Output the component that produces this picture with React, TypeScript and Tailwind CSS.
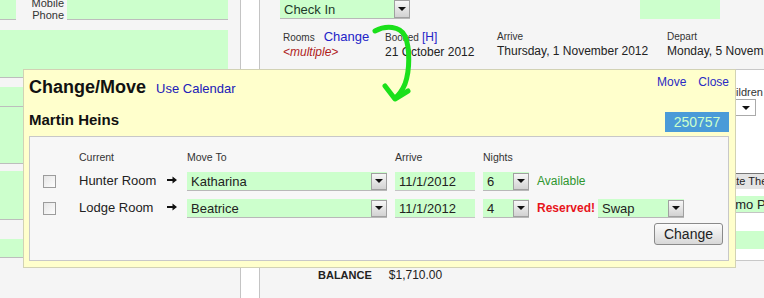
import React from "react";

function Tri() {
  return <span className="h-0 w-0 border-x-[4px] border-t-[4px] border-x-transparent border-t-[#111]" />;
}

function DropBtn({ h = "h-[17px]" }: { h?: string }) {
  return (
    <span
      className={
        "flex w-[16px] shrink-0 items-center justify-center border border-[#a0a0a0] bg-linear-to-b from-[#f7f7f7] to-[#d2d2d2] " +
        h
      }
    >
      <Tri />
    </span>
  );
}

function GreenSelect({ value, className }: { value: string; className: string }) {
  return (
    <div className={"flex h-[19px] items-start border-b border-[#b8b8b8] bg-[#ccffcc] " + className}>
      <span className="flex-1 truncate pl-[4px] pt-[1px] text-[13px] leading-[17px] text-[#222]">{value}</span>
      <span className="mt-[1px]">
        <DropBtn />
      </span>
    </div>
  );
}

function GreenInput({ value, className }: { value: string; className: string }) {
  return (
    <div
      className={
        "h-[19px] border-b border-[#c4c4c4] bg-[#ccffcc] pl-[4px] pt-[1px] text-[13px] leading-[17px] text-[#222] " +
        className
      }
    >
      {value}
    </div>
  );
}

function Check() {
  return <span className="block h-[13px] w-[13px] border border-[#9c9c9c] bg-linear-to-br from-[#e6e6e6] to-[#fdfdfd]" />;
}

function RowArrow() {
  return (
    <svg width="10" height="8" viewBox="0 0 10 8" className="-mt-[3px]">
      <path d="M0 3h5.5V0.5L10 4 5.5 7.5V5H0z" fill="#111" />
    </svg>
  );
}

type MoveRow = {
  current: string;
  to: string;
  arrive: string;
  nights: string;
  status: "ok" | "taken";
};

const rows: MoveRow[] = [
  { current: "Hunter Room", to: "Katharina", arrive: "11/1/2012", nights: "6", status: "ok" },
  { current: "Lodge Room", to: "Beatrice", arrive: "11/1/2012", nights: "4", status: "taken" },
];

function Field({ className }: { className: string }) {
  return <div className={"border-b border-[#bdbdbd] bg-[#ccffcc] " + className} />;
}

export default function App() {
  return (
    <div className="relative flex h-[298px] w-[764px] overflow-hidden bg-[#f5f5f5] font-['Liberation_Sans',Arial,sans-serif] text-[#222]">
      {/* left column of guest fields */}
      <div className="w-[241px] shrink-0 border-r border-[#c4c4c4]">
        <div className="flex h-[20px] items-start">
          <Field className="h-[20px] w-[16px]" />
          <div className="-mt-[3px] w-[51px] pr-[3px] text-right text-[11px] leading-[12px] text-[#333]">
            Mobile
            <br />
            Phone
          </div>
          <Field className="h-[20px] w-[161px]" />
        </div>
        <Field className="mt-[10px] h-[48px] w-[228px]" />
        <Field className="mt-[9px] h-[20px] w-[228px]" />
        <Field className="h-[57px] w-[228px]" />
        <Field className="mt-[7px] h-[49px] w-[228px]" />
        <Field className="mt-[19px] h-[19px] w-[228px]" />
      </div>

      <div className="w-[19px] shrink-0 border-r border-[#c4c4c4] bg-white" />

      {/* booking panel */}
      <div className="flex min-w-0 flex-1 flex-col">
        <div className="flex h-[19px] pl-[20px]">
          <div className="flex h-[19px] w-[130px] items-start border-b border-[#b8b8b8] bg-[#ccffcc]">
            <span className="flex-1 pl-[4px] pt-[1px] text-[13px] leading-[17px] text-[#1d3a2a]">Check In</span>
            <DropBtn h="h-[18px]" />
          </div>
          <div className="ml-[230px] h-[19px] w-[80px] bg-[#ccffcc]" />
        </div>

        <div className="mt-[12px] flex pl-[23px]">
          <div className="w-[102px] shrink-0">
            <div className="flex items-baseline gap-[9px] leading-[12px]">
              <span className="text-[10px] text-[#333]">Rooms</span>
              <span className="text-[13px] text-[#2323c8]">Change</span>
            </div>
            <div className="mt-[1px] text-[12px] leading-[14px] italic text-[#b01c1c]">&lt;multiple&gt;</div>
          </div>
          <div className="w-[112px] shrink-0">
            <div className="flex items-baseline gap-[3px] leading-[12px]">
              <span className="text-[10px] text-[#333]">Booked</span>
              <span className="text-[12px] text-[#2323c8]">[H]</span>
            </div>
            <div className="mt-[1px] text-[12px] leading-[14px]">21 October 2012</div>
          </div>
          <div className="w-[170px] shrink-0">
            <div className="text-[10px] leading-[12px] text-[#333]">Arrive</div>
            <div className="mt-[1px] text-[12px] leading-[14px]">Thursday, 1 November 2012</div>
          </div>
          <div className="shrink-0 whitespace-nowrap">
            <div className="text-[10px] leading-[12px] text-[#333]">Depart</div>
            <div className="mt-[1px] text-[12px] leading-[14px]">Monday, 5 November 2012</div>
          </div>
        </div>

        <div className="mt-[10px] h-[192px] shrink-0 border-y border-[#c8c8c8] bg-white pl-[440px]">
          <div className="w-[110px]">
            <div className="mt-[16px] whitespace-nowrap pl-[22px] text-[11px] leading-[13px] text-[#333]">Children</div>
            <div className="flex h-[17px] w-[56px] items-center justify-end border border-[#aaa] bg-white pr-[5px]">
              <Tri />
            </div>
            <div className="mt-[57px] h-[16px] w-[104px] whitespace-nowrap border-t border-[#777] bg-[#e4e4e4] pl-[10px] text-[11px] leading-[15px] text-[#222]">
              Update The Rate
            </div>
            <div className="mt-[7px] h-[17px] whitespace-nowrap border-b border-[#c4c4c4] bg-[#ccffcc] pl-[15px] text-[13px] leading-[17px]">
              Promo Package
            </div>
            <div className="mt-[18px] h-[18px] bg-[#ccffcc]" />
          </div>
        </div>

        <div className="mt-[8px] flex items-baseline pl-[58px]">
          <span className="text-[11px] font-bold leading-[13px]">BALANCE</span>
          <span className="ml-[17px] text-[12px] leading-[13px]">$1,710.00</span>
        </div>
      </div>

      {/* change / move dialog */}
      <div className="absolute left-[23px] top-[69px] w-[713px] border border-[#d2d2b4] bg-[#ffffcc]">
        <div className="flex items-start justify-between pl-[5px] pr-[6px] pt-[5px]">
          <div className="mt-[2px] flex items-baseline">
            <span className="text-[18px] font-bold leading-[21px] text-[#111]">Change/Move</span>
            <span className="ml-[10px] text-[13px] text-[#2020b8]">Use Calendar</span>
          </div>
          <div className="flex gap-[12px] text-[12px] leading-[14px] text-[#2a2ac4]">
            <span>Move</span>
            <span>Close</span>
          </div>
        </div>
        <div className="mt-[12px] flex items-start justify-between pl-[5px] pr-[6px]">
          <span className="text-[15px] font-bold leading-[17px] text-[#111]">Martin Heins</span>
          <span className="mt-[1px] h-[20px] w-[64px] bg-[#4a9bd8] text-center text-[14px] leading-[20px] text-[#ccffcc]">
            250757
          </span>
        </div>

        <div className="mb-[6px] ml-[5px] mr-[6px] mt-[4px] border border-[#c8c8c8] bg-[#f7f7f7] pb-[15px] pt-[14px]">
          <div className="flex text-[10.5px] leading-[13px] text-[#333]">
            <span className="w-[49px]" />
            <span className="w-[108px]">Current</span>
            <span className="w-[208px]">Move To</span>
            <span className="w-[88px]">Arrive</span>
            <span>Nights</span>
          </div>
          {rows.map((r, i) => (
            <div key={i} className="mt-[8px] flex h-[19px] items-center">
              <span className="w-[49px] pl-[13px]">
                <Check />
              </span>
              <span className="w-[88px] text-[13px]">{r.current}</span>
              <span className="w-[20px]">
                <RowArrow />
              </span>
              <span className="w-[208px]">
                <GreenSelect value={r.to} className="w-[200px]" />
              </span>
              <span className="w-[88px]">
                <GreenInput value={r.arrive} className="w-[80px]" />
              </span>
              <span className="w-[54px]">
                <GreenSelect value={r.nights} className="w-[46px]" />
              </span>
              {r.status === "ok" ? (
                <span className="text-[12px] text-[#2f962f]">Available</span>
              ) : (
                <>
                  <span className="text-[12px] font-bold text-[#e8141c]">Reserved!</span>
                  <GreenSelect value="Swap" className="ml-[3px] w-[86px]" />
                </>
              )}
            </div>
          ))}
          <div className="mt-[5px] flex justify-end pr-[5px]">
            <button className="h-[22px] w-[69px] rounded-[3px] border border-[#8a8a8a] bg-linear-to-b from-[#fcfcfc] to-[#d8d8d8] text-[14px] leading-[20px] text-[#222]">
              Change
            </button>
          </div>
        </div>
      </div>

      {/* hand-drawn pointer */}
      <svg className="pointer-events-none absolute left-0 top-0" width="764" height="298" viewBox="0 0 764 298">
        <g fill="none" stroke="#1be01b" strokeWidth="5" strokeLinecap="round" strokeLinejoin="round">
          <path d="M375 31 C386 25 400 26 405 36 C410 48 410 70 405 84 C402 91 399 95 395 98" />
          <path d="M385 86 L395 99 L408 91" />
        </g>
      </svg>
    </div>
  );
}
